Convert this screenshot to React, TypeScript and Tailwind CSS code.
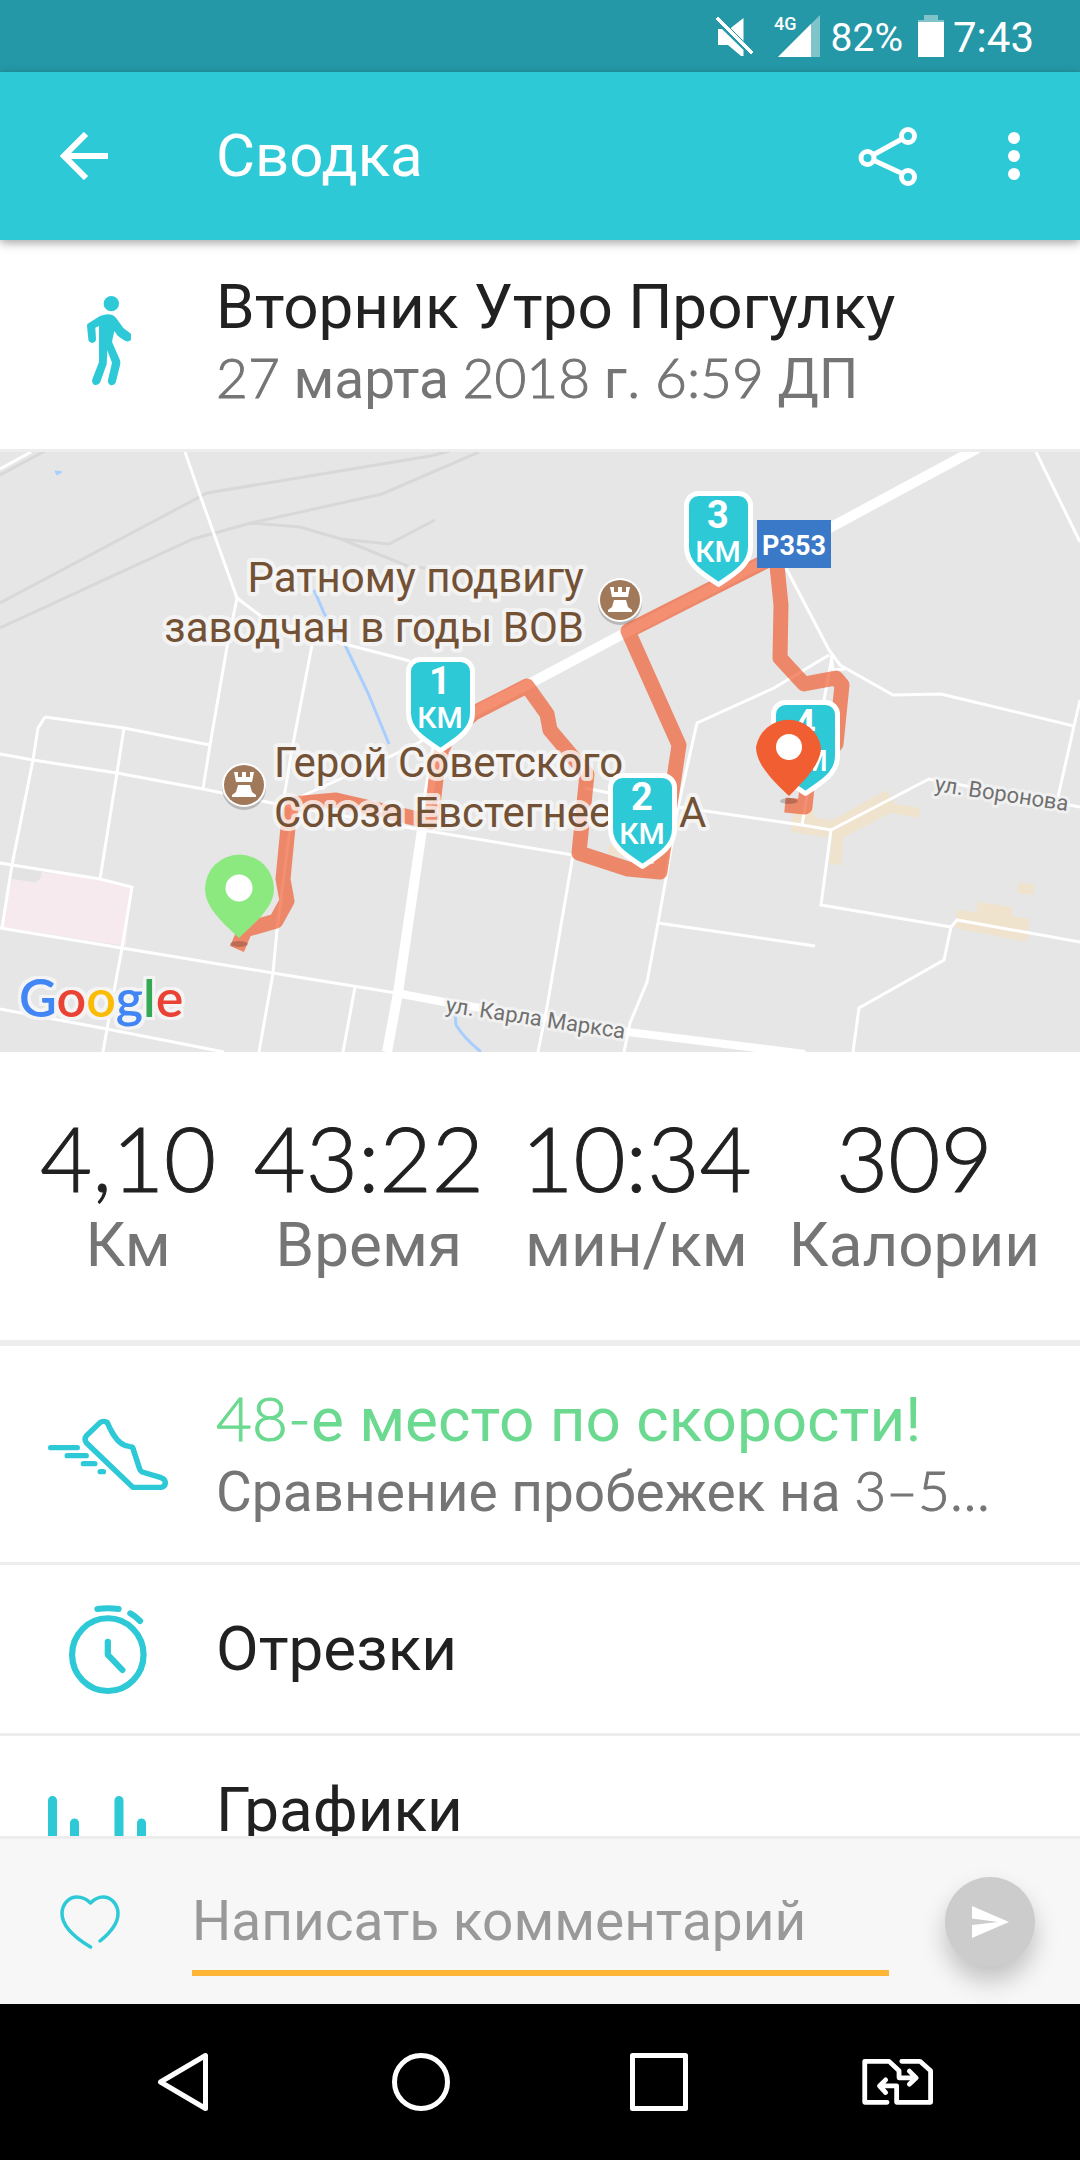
import type { ReactNode } from "react";

/* Numerals are set in a lighter companion face. */
function Num({ children }: { children: ReactNode }) {
  return (
    <span className="font-['Lato',sans-serif] leading-none font-light [-webkit-text-stroke:1px_currentColor]">{children}</span>
  );
}

function StatusBar() {
  return (
    <div className="flex h-18 shrink-0 items-center justify-end bg-[#2498a6] pr-[46px] text-white">
      <svg className="mr-[19px] h-10 w-10" viewBox="0 0 40 40" fill="#fff" aria-label="Без звука" role="img">
        <path d="M28.500 2 V29.500 L14.500 13 Z" />
        <path d="M3 13 H7 L28.500 34 V40 H26 L13 29 H3 Z" />
        <path d="M0 3 L3 0 L39 36 L36 39 Z" stroke="#2498a6" strokeWidth="1" />
      </svg>
      <svg className="mr-[11px] h-[42px] w-[46px] overflow-visible" viewBox="0 0 46 42" aria-label="Сигнал" role="img">
        <path d="M4 42 L46 0 V42 Z" fill="#fff" opacity="0.42" />
        <path d="M4 42 L37 9 V42 Z" fill="#fff" />
        <text x="0" y="15" fill="#fff" className="font-['Roboto',sans-serif] text-[18px] font-medium">4G</text>
      </svg>
      <span className="mr-[15px] pt-1 text-[39px] leading-none">82%</span>
      <svg className="mr-[9px] h-[42px] w-[26px]" viewBox="0 0 26 42" aria-label="Батарея" role="img">
        <path d="M6 0 H20 V5 H26 V7 H0 V5 H6 Z" fill="#fff" opacity="0.42" />
        <path d="M0 7 H26 V42 H0 Z" fill="#fff" />
      </svg>
      <span className="pt-1 text-[42px] leading-none">7:43</span>
    </div>
  );
}

function AppBar() {
  return (
    <header className="relative z-10 flex h-42 shrink-0 items-center bg-[#2dc9d7] text-white shadow-[0_3px_9px_rgba(0,0,0,0.35)]">
      <button aria-label="Назад" className="flex h-full w-42 items-center justify-center">
        <svg className="h-12 w-12" viewBox="0 0 48 48" fill="none" stroke="#fff" strokeWidth="6">
          <path d="M26 2 L4 24 L26 46 M4 24 H48" />
        </svg>
      </button>
      <h1 className="ml-12 flex-1 text-[60px] leading-[76px]">Сводка</h1>
      <button aria-label="Поделиться" className="flex h-full w-30 items-center justify-center">
        <svg className="h-15 w-15" viewBox="0 0 60 60" fill="none" stroke="#fff">
          <path d="M15 29 L44 13 M15 34 L43 47" strokeWidth="5" />
          <circle cx="9.500" cy="32" r="6.500" strokeWidth="5" />
          <circle cx="50" cy="10" r="6.500" strokeWidth="5" />
          <circle cx="50" cy="51" r="6.500" strokeWidth="5" />
        </svg>
      </button>
      <button aria-label="Ещё" className="flex h-full w-[132px] items-center justify-center">
        <svg className="h-12 w-3" viewBox="0 0 12 48" fill="#fff">
          <circle cx="6" cy="6" r="6" />
          <circle cx="6" cy="24" r="6" />
          <circle cx="6" cy="42" r="6" />
        </svg>
      </button>
    </header>
  );
}

function WalkIcon() {
  return (
    <svg className="h-[90px] w-[46px]" viewBox="256 710 136 270" fill="#2dc9d7">
      <circle cx="334" cy="733" r="23" />
      <path d="M263 793 L300 770 Q332 757 348 775 L370 806 L391 822 Q400 834 393 842 Q384 850 372 843 L353 829 L343 815 L336 847 L360 903 Q362 910 360 918 L347 970 Q340 980 330 977 Q322 972 324 962 L336 910 L322 873 L320 915 L300 970 Q292 980 282 976 Q274 970 277 960 L297 908 V800 L286 805 L288 840 Q287 850 277 851 Q266 850 265 840 L261 800 Q261 795 263 793 Z" />
    </svg>
  );
}

function ShoeIcon() {
  return (
    <svg className="h-[73px] w-30" viewBox="139 174 349 219" preserveAspectRatio="none" fill="none" stroke="#2dc9d7" strokeWidth="16" strokeLinecap="round" strokeLinejoin="round">
      <path d="M147 263 H224 M195 287 H250 M242 311 H275 M291 335 H300" />
      <path d="M311 187 Q299 181 291 187 L251 227 Q243 238 251 249 L386 382 H468 Q481 380 480 366 Q479 357 468 353 L413 336 Q407 333 405 325 L387 268 Q386 260 378 260 Q350 258 330 225 Q318 205 311 187 Z" />
    </svg>
  );
}

function StopwatchIcon() {
  return (
    <svg className="h-[89px] w-[78px]" viewBox="200 735 225 267" preserveAspectRatio="none" fill="none" stroke="#2dc9d7" strokeWidth="18" strokeLinecap="round" strokeLinejoin="round">
      <ellipse cx="312" cy="884" rx="103" ry="109" />
      <path d="M312 845 V884 L354 930 M282 747 Q312 742 343 747 M377 760 Q393 769 405 783" />
    </svg>
  );
}

function BarsIcon() {
  return (
    <svg className="h-24 w-30" viewBox="0 0 120 96" fill="none" stroke="#2dc9d7" strokeWidth="9" strokeLinecap="round">
      <path d="M4.500 4.500 V91 M26.500 27 V91 M49 50 V91 M71 4.500 V91 M93.500 27 V91 M115.500 50 V91" />
    </svg>
  );
}

function Shield({ x, y, n }: { x: number; y: number; n: string }) {
  return (
    <g transform={`translate(${x} ${y})`}>
      <path
        d="M14.500 2.500 H54.500 A12 12 0 0 1 66.500 14.500 V56 C66.500 73 52 82 34.500 93.500 C17 82 2.500 73 2.500 56 V14.500 A12 12 0 0 1 14.500 2.500 Z"
        fill="#2dc9d7"
        stroke="#fff"
        strokeWidth="5"
        strokeLinejoin="round"
      />
      <text x="34" y="37" textAnchor="middle" fill="#fff" className="font-['Roboto',sans-serif] text-[38px] font-bold">{n}</text>
      <text x="34" y="71" textAnchor="middle" fill="#fff" className="font-['Roboto',sans-serif] text-[30px] font-medium">КМ</text>
    </g>
  );
}

function Rook({ x, y }: { x: number; y: number }) {
  return (
    <g transform={`translate(${x} ${y})`}>
      <circle cy="3" r="22" fill="#000" opacity="0.2" />
      <circle r="22" fill="#fff" />
      <circle r="20" fill="#a0785a" />
      <path d="M-10 -13 H-6 V-8 H-2 V-13 H2 V-8 H6 V-13 H10 L8 -3 H-8 Z M-6 0 H6 L8 7 L12 10 V12 H-12 V10 L-8 7 Z" fill="#fff" />
    </g>
  );
}

const PLACE = "font-['Roboto',sans-serif] text-[42px]";
const STREET = "font-['Roboto',sans-serif] text-[22px]";

function RouteMap() {
  return (
    <svg className="block w-full bg-[#e6e6e6]" viewBox="0 0 1080 600" role="img" aria-label="Карта маршрута">
      <path d="M12 426 L41 420 L98 427 L131 436 L126 494 L2 475 Z" fill="#f6eaee" />
      <path d="M12 414 L42 419 Q41 431 33 430 L12 427 Z" fill="#e3e3e3" />
      <g fill="#efe3cd">
        <path d="M793 361 L812 355 L815 366 L833 368 L886 338 L895 352 L920 356 L919 366 L890 361 L843 386 L841 413 L829 412 L832 386 L791 380 Z" />
        <path d="M955 476 L957 458 L976 460 L978 450 L1012 455 V464 L1029 467 L1027 490 Z" />
        <path d="M1018 431 L1034 432 L1033 443 L1017 441 Z" />
        <path d="M608 393 L660 400 V412 L608 402 Z" />
      </g>
      <g fill="none" stroke="#d8d8d8" strokeWidth="3">
        <path d="M0 151 L207 41 L430 4 L450 -1 M0 176 L193 87 L251 71 L382 42 L479 0" />
        <path d="M251 71 L300 75 L341 87 L389 92 L435 68 M341 87 L410 115 L500 121 M0 23 L45 -1" />
      </g>
      <g fill="none" stroke="#a8ceff" strokeWidth="3">
        <path d="M314 138 L324 161 L346 195 L368 241 L389 292 M455 561 L456 573 Q464 586 481 600" />
        <path d="M55 19 L62 20 L57 23 Z" fill="#a8ceff" strokeWidth="1" />
      </g>
      <g fill="none" stroke="#fff" strokeWidth="3">
        <path d="M0 17 L31 0 M185 0 L200 43 L237 146 L262 165 L337 190 L410 209 M237 146 L227 195 L210 293 L203 337" />
        <path d="M45 265 L124 276 L210 293 M45 265 L38 276 L33 308 L12 413 L2 476 M124 276 L117 321 L100 427" />
        <path d="M0 302 L33 308 L117 321 L203 337 L272 351 L422 378 L573 403 M312 193 L293 292 L284 345 M294 345 L277 478 L273 521 L259 600" />
        <path d="M300 345 L389 305 L420 290 L445 270 M0 411 L12 413 L100 427 L132 435 L122 496 L107 577 L103 600" />
        <path d="M0 476 L122 496 L273 521 L396 541 M0 557 L107 577 L224 600 M355 535 L343 600 M573 403 L547 555 L538 600" />
        <path d="M829 203 L774 236 L697 271 L678 355 L667 421 L658 471 L647 530 L630 571 L624 600 M585 336 L678 355 L802 373 L831 378 L929 327 L1080 355" />
        <path d="M1036 0 L1080 90 M786 116 L829 198 L840 213 L893 243 L941 242 L1074 274 L1058 345 M1074 274 L1080 248 M831 203 L833 218 L845 217 M832 205 L824 248 L802 373" />
        <path d="M831 378 L821 453 L951 475 L944 508 L859 556 L853 600 M951 475 L957 468 L1080 490 M658 471 L815 494" />
      </g>
      <g fill="none" stroke="#fff" strokeWidth="10" strokeLinejoin="round">
        <path d="M978 -4 L835 73 L623 182 L527 233 L440 277 L422 378 L398 541 L387 600" />
        <path d="M396 541 L444 550 L628 580 L805 602" strokeWidth="8" />
      </g>
      <path
        d="M237 497 L245 478 L276 469 L287 449 L283 427 L289 365 L292 352 L336 348 L431 370 L438 310 L447 285 L474 261 L527 234 L547 262 L550 278 L587 322 L579 401 L628 417 L660 420 L679 293 L628 179 L776 104 L781 153 L780 206 L804 232 L836 226 L842 233 L836 292 L808 325 L805 355 L785 353"
        fill="none"
        stroke="#ef5c2d"
        strokeWidth="15"
        strokeLinejoin="round"
        opacity="0.68"
      />
      <ellipse cx="239" cy="492" rx="9" ry="3" opacity="0.2" />
      <ellipse cx="789" cy="349" rx="9" ry="3" opacity="0.2" />

      <g fill="#735135" stroke="#f8f8f8" strokeOpacity="0.75" strokeWidth="8" strokeLinejoin="round" paintOrder="stroke">
        <text x="584" y="140" textAnchor="end" className={PLACE}>Ратному подвигу</text>
        <text x="584" y="190" textAnchor="end" className={PLACE}>заводчан в годы ВОВ</text>
        <text x="274" y="325" className={PLACE}>Герой Советского</text>
        <text x="274" y="375" className={PLACE}>Союза Евстегнее</text>
        <text x="679" y="375" className={PLACE}>А</text>
      </g>
      <g fill="#707070" stroke="#f4f4f4" strokeOpacity="0.8" strokeWidth="6" strokeLinejoin="round" paintOrder="stroke">
        <text transform="translate(934 339) rotate(8.500)" className={STREET}>ул. Воронова</text>
        <text transform="translate(445 560) rotate(8.500)" className={STREET}>ул. Карла Маркса</text>
      </g>
      <Rook x={620} y={148} />
      <Rook x={244} y={333} />

      <rect x="757" y="68" width="74" height="48" fill="#3a78c8" />
      <text x="794" y="103" textAnchor="middle" fill="#fff" className="font-['Roboto',sans-serif] text-[27px] font-bold">P353</text>

      <Shield x={406} y={205} n="1" />
      <Shield x={608} y={321} n="2" />
      <Shield x={684} y={39} n="3" />
      <Shield x={771} y={248} n="4" />

      <path d="M239 486 C222 470 205 455 205 437 A34 34 0 0 1 274 437 C274 455 256 470 239 486 Z" fill="#8ce97f" />
      <circle cx="239" cy="436" r="13.500" fill="#fff" />
      <path d="M789 344 C772 328 756 312 756 295 A33 33 0 0 1 821 295 C821 312 805 328 789 344 Z" fill="#f15e31" />
      <circle cx="789" cy="295" r="13" fill="#fff" />

      <text
        x="19"
        y="565"
        className="font-['Lato',sans-serif] text-[52px] font-semibold [filter:drop-shadow(3px_0_0_#f4f4f4)_drop-shadow(-3px_0_0_#f4f4f4)_drop-shadow(0_3px_0_#f4f4f4)_drop-shadow(0_-3px_0_#f4f4f4)]"
      >
        <tspan fill="#4285f4">G</tspan>
        <tspan fill="#ea4335">o</tspan>
        <tspan fill="#fbbc05">o</tspan>
        <tspan fill="#4285f4">g</tspan>
        <tspan fill="#34a853">l</tspan>
        <tspan fill="#ea4335">e</tspan>
      </text>
    </svg>
  );
}

const stats = [
  { value: "4,10", label: "Км" },
  { value: "43:22", label: "Время" },
  { value: "10:34", label: "мин/км" },
  { value: "309", label: "Калории" },
];

function Stats() {
  return (
    <dl className="flex justify-between border-b-6 border-[#ededed] px-10 pt-15 pb-[57px] text-center">
      {stats.map((s) => (
        <div key={s.label} className="flex flex-col-reverse gap-[5px]">
          <dt className="text-[62px] leading-[76px] text-[#757575]">{s.label}</dt>
          <dd className="font-['Lato',sans-serif] text-[90px] leading-none font-light [-webkit-text-stroke:1px_currentColor]">{s.value}</dd>
        </div>
      ))}
    </dl>
  );
}

function IconCell({ children }: { children: ReactNode }) {
  return <span className="flex w-54 shrink-0 items-center justify-center">{children}</span>;
}

export default function App() {
  return (
    <div className="flex h-screen flex-col bg-white font-['Roboto',sans-serif] text-[#212121]">
      <StatusBar />
      <AppBar />

      <main className="min-h-0 flex-1 overflow-y-auto [scrollbar-width:none]">
        <section className="flex items-center border-b-3 border-[#ededed] pt-[29px] pb-9">
          <IconCell><WalkIcon /></IconCell>
          <div className="whitespace-nowrap">
            <h2 className="text-[62px] leading-[76px]">Вторник Утро Прогулку</h2>
            <p className="text-[55px] leading-[68px] text-[#757575]">
              <Num>27</Num> марта <Num>2018</Num> г. <Num>6:59</Num> ДП
            </p>
          </div>
        </section>

        <RouteMap />
        <Stats />

        <button className="flex w-full items-center border-b-3 border-[#ededed] py-9 text-left">
          <IconCell><ShoeIcon /></IconCell>
          <span className="flex flex-col whitespace-nowrap">
            <span className="text-[62px] leading-[76px] text-[#6bd98f]"><Num>48-</Num>е место по скорости!</span>
            <span className="text-[55px] leading-[68px] text-[#757575]">Сравнение пробежек на <Num>3–5…</Num></span>
          </span>
        </button>
        <button className="flex min-h-[171px] w-full items-center border-b-3 border-[#ededed] py-9 text-left">
          <IconCell><StopwatchIcon /></IconCell>
          <span className="text-[62px] leading-[76px]">Отрезки</span>
        </button>
        <button className="flex min-h-54 w-full items-center py-9 text-left">
          <IconCell><BarsIcon /></IconCell>
          <span className="self-start text-[62px] leading-[76px]">Графики</span>
        </button>
      </main>

      <form className="flex h-42 shrink-0 items-center border-t-3 border-[#ededed] bg-[#f7f7f7] pr-[45px]">
        <button type="button" aria-label="Нравится" className="flex w-45 items-center justify-center">
          <svg className="h-[54px] w-15" viewBox="0 0 60 54" fill="none" stroke="#2dc9d7" strokeWidth="3.500" strokeLinecap="round" strokeLinejoin="round">
            <path d="M30.500 52 C17 44 2 32 2 18.500 C2 9 9 2 17 2 C22 2 27 4.500 30.500 8 C34 4.500 38 2 43 2 C51 2 58 9 58 18.500 C58 28 50 38 40 46" />
          </svg>
        </button>
        <input
          type="text"
          aria-label="Написать комментарий"
          placeholder="Написать комментарий"
          className="ml-3 h-[109px] min-w-0 flex-1 border-b-6 border-[#ffb636] bg-transparent pt-1 text-[55px] outline-none placeholder:text-[#999999]"
        />
        <button type="submit" aria-label="Отправить" className="ml-14 flex size-[90px] items-center justify-center rounded-full bg-[#cccccc] shadow-[0_14px_24px_rgba(0,0,0,0.22)]">
          <svg className="h-8 w-[37px]" viewBox="0 0 37 32" fill="#fff">
            <path d="M0 0 L37 16 L0 32 V19 L26 16 L0 12.500 Z" />
          </svg>
        </button>
      </form>

      <nav className="grid h-39 shrink-0 grid-cols-4 items-center justify-items-center bg-black px-16">
        <button aria-label="Назад">
          <svg className="h-15 w-[52px]" viewBox="0 0 52 60" fill="none" stroke="#fff" strokeWidth="5" strokeLinejoin="round">
            <path d="M48.500 3.500 V56.500 L3.500 30 Z" />
          </svg>
        </button>
        <button aria-label="Домой">
          <svg className="size-[58px]" viewBox="0 0 58 58" fill="none" stroke="#fff" strokeWidth="5">
            <circle cx="29" cy="29" r="26.500" />
          </svg>
        </button>
        <button aria-label="Недавние приложения">
          <svg className="size-[58px]" viewBox="0 0 58 58" fill="none" stroke="#fff" strokeWidth="5" strokeLinejoin="round">
            <path d="M2.500 2.500 H55.500 V55.500 H2.500 Z" />
          </svg>
        </button>
        <button aria-label="Сменить SIM-карту">
          <svg className="h-[46px] w-[71px]" viewBox="933 1018 207 137" preserveAspectRatio="none" fill="none" stroke="#fff" strokeWidth="14" strokeLinecap="round" strokeLinejoin="round">
            <path d="M1006 1147 H941 V1025 H1012 L1041 1053 V1074 H1090 M1071 1054 L1091 1074 L1071 1093" />
            <path d="M1049 1025 H1102 L1133 1053 V1147 H1034 V1098 H985 M1002 1080 L984 1098 L1002 1118" />
          </svg>
        </button>
      </nav>
    </div>
  );
}
